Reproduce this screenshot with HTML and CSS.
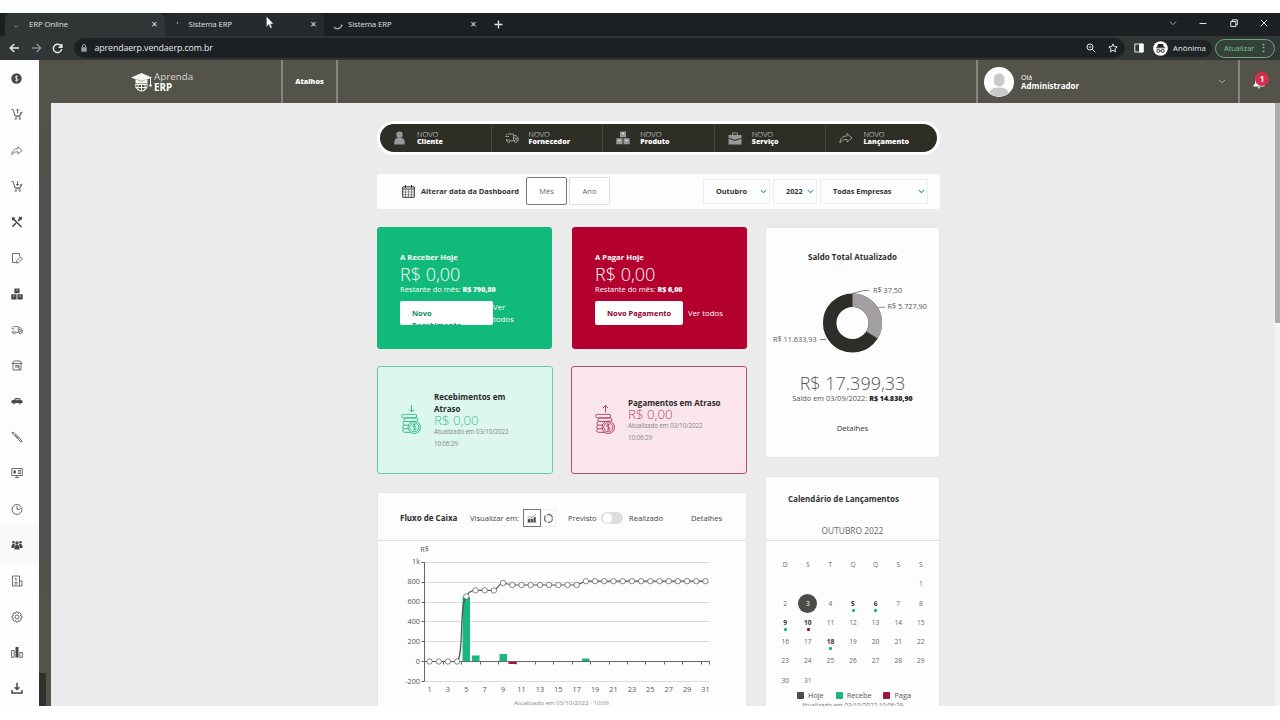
FILE: index.html
```html
<!DOCTYPE html>
<html lang="pt-BR">

<head>
  <meta charset="UTF-8">
  <meta name="viewport" content="width=device-width, initial-scale=1.0">
  <title>ERP Online</title>
  <link rel="stylesheet" href="styles.css">
</head>

<body>
  <svg class="defs" width="0" height="0">
    <symbol id="cart" viewBox="0 0 12 12">
      <path d="M.5 1.5h1.6l1.800 6.300h5.300l2-4M3.200 5l.8 2.500M9.900 4 9 6.800M4.500 8.800h5" />
      <circle cx="4.800" cy="10.700" r=".7" />
      <circle cx="8.800" cy="10.700" r=".7" />
    </symbol>
    <symbol id="share" viewBox="0 0 14 12">
      <path d="M1 11C1 6.500 3.500 4 8 4V1.500L13 6 8 10V7.500C5 7.300 2.500 8 1 11z" />
    </symbol>
    <symbol id="boxes" viewBox="0 0 14 14">
      <path class="solid" d="M4 .5h6v5.700H4zM.3 7.300h6.200v6H.3zM7.500 7.300h6.200v6H7.500z" />
      <path class="cut" d="M6 2.500h2M2.300 9.400h2M9.500 9.400h2" />
    </symbol>
    <symbol id="truck" viewBox="0 0 14 11">
      <path d="M3 1.500h5.500v6.800H5.300M8.500 3h2.700l2 2.500v2.800h-1M8.500 8.300h.8M2.300 8.300H1.500V6.500M.5 4h3.500M1.500 1.500v1.200M10 4.300v1.500h3" />
      <circle cx="3.800" cy="8.600" r="1.400" />
      <circle cx="10.700" cy="8.600" r="1.400" />
    </symbol>
    <symbol id="coins" viewBox="0 0 20 22">
      <rect x=".7" y=".8" width="15" height="3.600" rx="1.800" />
      <rect x="3" y="4.400" width="14" height="3.600" rx="1.800" />
      <path d="M9 8H3.700a1.800 1.800 0 0 0 0 3.600H8M3.500 11.600a1.800 1.800 0 0 0 0 3.600H8M3.500 15.200a1.800 1.800 0 0 0 0 3.600H10" />
      <circle class="coin" cx="13.300" cy="13.800" r="6.200" />
      <circle cx="13.300" cy="13.800" r="4.500" />
      <path d="M15 11.800c-.8-1-3.300-1-3.300.5 0 1.700 3.400 1 3.400 2.800 0 1.500-2.700 1.500-3.500.4M13.300 10.500v6.500" />
    </symbol>
    <symbol id="chev" viewBox="0 0 8 5">
      <path d="M1 1l3 2.800L7 1" />
    </symbol>
  </svg>

  <div class="window">
    <div class="tabs">
      <div class="tab active">
        <span class="favicon">..</span>
        <span class="tab_name">ERP Online</span>
        <span class="close">✕</span>
      </div>
      <div class="tab hover">
        <span class="favicon up">'</span>
        <span class="tab_name">Sistema ERP</span>
        <span class="close">✕</span>
      </div>
      <div class="tab">
        <svg class="spinner" width="10" height="10" viewBox="0 0 10 10"><path d="M1 7c2 2.800 7 2.300 8-2.500" /></svg>
        <span class="tab_name">Sistema ERP</span>
        <span class="close">✕</span>
      </div>
      <svg class="plus" width="9" height="9" viewBox="0 0 9 9"><path d="M4.500 .5v8M.5 4.500h8" /></svg>
      <div class="window_buttons">
        <svg width="8" height="8" viewBox="0 0 8 8"><path class="dim" d="M.8 2.500 4 5.700l3.200-3.200" /></svg>
        <svg width="8" height="8" viewBox="0 0 8 8"><path d="M.5 4.500h7" /></svg>
        <svg width="8" height="8" viewBox="0 0 8 8"><path d="M.8 2.500h5v5h-5zM2.300 2.500V.8h5v5H5.800" /></svg>
        <svg width="8" height="8" viewBox="0 0 8 8"><path d="M.8 .8l6.400 6.400M7.200 .8.800 7.200" /></svg>
      </div>
    </div>

    <div class="toolbar">
      <svg class="nav" width="11" height="10" viewBox="0 0 11 10"><path d="M10 5H1.500M5.300 1 1.300 5l4 4" /></svg>
      <svg class="nav off" width="11" height="10" viewBox="0 0 11 10"><path d="M1 5h8.500M5.700 1l4 4-4 4" /></svg>
      <svg class="nav" width="11" height="11" viewBox="0 0 11 11"><path d="M9.300 3.500A4.200 4.200 0 1 0 9.700 6M9.800 1v3.200H6.500" /></svg>
      <div class="address">
        <svg class="lock" width="6" height="8" viewBox="0 0 6 8"><path d="M.3 3.300h5.400v4.400H.3z" /><path class="arc" d="M1.500 3.500V2a1.500 1.500 0 0 1 3 0v1.500" /></svg>
        <span class="url">aprendaerp.vendaerp.com.br</span>
        <svg class="addr_icon" width="10" height="10" viewBox="0 0 10 10"><circle cx="4" cy="4" r="3" /><path d="M6.300 6.300 9.300 9.300M2.700 4h2.600" /></svg>
        <svg class="addr_icon" width="10" height="10" viewBox="0 0 10 10"><path d="M5 .9l1.200 2.700 3 .3-2.300 2 .7 2.900L5 7.300 2.400 8.800l.7-2.900-2.300-2 3-.3z" /></svg>
      </div>
      <svg class="panel" width="10" height="10" viewBox="0 0 10 10"><path d="M.8 1h8.400v8H.8z" /><path class="fill" d="M5.500 1h3.700v8H5.500z" /></svg>
      <div class="incognito">
        <svg width="15" height="15" viewBox="0 0 15 15"><circle class="bg" cx="7.500" cy="7.500" r="7.300" /><path class="hat" d="M5 3h5l.8 3H4.200zM3 6.300h9v.9H3z" /><circle cx="5.300" cy="9.900" r="1.500" /><circle cx="9.700" cy="9.900" r="1.500" /><path d="M6.800 9.700h1.400" /></svg>
        <span>Anônima</span>
      </div>
      <div class="update"><span>Atualizar</span><b>⋮</b></div>
    </div>

    <div class="app">
      <nav class="sidebar">
        <a><svg width="11" height="11" viewBox="0 0 12 12"><circle class="solid" cx="6" cy="6" r="5.700" /><path class="cut" d="M7.600 4.300c-.7-.9-3.200-.8-3.200.5 0 1.600 3.300.8 3.300 2.500 0 1.300-2.600 1.400-3.400.3M6 2.700v6.600" /></svg></a>
        <a><svg width="12" height="12" viewBox="0 0 12 12"><use href="#cart" /><path d="M6.500 5.500V1M5 2.500 6.500 1 8 2.500" /></svg></a>
        <a><svg width="12" height="11"><use href="#share" /></svg></a>
        <a><svg width="12" height="12" viewBox="0 0 12 12"><use href="#cart" /><path d="M6.500 1v4.500M5 4l1.500 1.500L8 4" /></svg></a>
        <a><svg class="thick" width="12" height="12" viewBox="0 0 12 12"><path d="M1 1.500 10.500 11M11 1 7 5M5 7 1.500 10.700" /><path d="M9 .8 8.300 3.500 11 3M1 3.500h2V1.300" /></svg></a>
        <a><svg width="12" height="12" viewBox="0 0 12 12"><path d="M5 10.500H1.500v-9h7v3M6 8.500 9.500 5l2 1.800-3.700 3.700-2.300.5z" /></svg></a>
        <a><svg width="12" height="12"><use href="#boxes" /></svg></a>
        <a><svg width="12" height="10"><use href="#truck" /></svg></a>
        <a><svg width="12" height="12" viewBox="0 0 12 12"><path d="M1 4.500 3 2h6l2 2.500zM2 4.500V11h8V4.500M4 6.500h4V11M4 8h4" /></svg></a>
        <a><svg width="12" height="8" viewBox="0 0 12 8"><path class="solid" d="M.5 3.500 3 2.800 4.500 1h4L10 3l1.500.8V6h-11z" /><circle cx="3" cy="6" r="1" /><circle cx="9" cy="6" r="1" /><path class="cut" d="M4.300 2.700h4.500" /></svg></a>
        <a><svg width="12" height="12" viewBox="0 0 12 12"><path d="M1 1.200 3.500 2l5 5-1.300 1.300-5-5zM4 3.700 7 7M8.500 7 11 10.500l-1 .5-2.700-2.700" /></svg></a>
        <a><svg width="12" height="12" viewBox="0 0 12 12"><path d="M.8 1.500h10.500v7H.8zM4 10.500h4M6 8.500v2M7 3.500h3M7 5h3M7 6.500h3" /><path class="solid" d="M2.500 3.500h2.300v3H2.500z" /></svg></a>
        <a><svg width="12" height="12" viewBox="0 0 12 12"><path d="M10.500 4.300A5 5 0 1 0 11 6.500M6 3v3.200h3M11.500 4.500 10.400 6 9 5" /></svg></a>
        <a class="current"><svg width="12" height="10" viewBox="0 0 12 10"><path class="solid" d="M3.500 9.500c-.3-3 .3-4 1.500-4.500h2c1.200.5 1.800 1.500 1.500 4.500zM.5 8C.2 5.500.8 4.500 2 4h2L3 8zM11.500 8c.3-2.500-.3-3.500-1.500-4H8l1 4z" /><circle class="solid" cx="6" cy="3" r="1.700" /><circle class="solid" cx="2.500" cy="2.300" r="1.300" /><circle class="solid" cx="9.500" cy="2.300" r="1.300" /></svg></a>
        <a><svg width="12" height="12" viewBox="0 0 12 12"><path d="M1.500 1h7v10h-7zM8.500 6H11v5H8.500M3.500 9h3M3.500 7.500h3M4 3.200h1V6" /></svg></a>
        <a><svg width="12" height="12" viewBox="0 0 12 12"><path d="M5 1h2l.4 1.400 1.300-.7L10.200 3.200l-.7 1.300L11 5v2l-1.500.4.7 1.400-1.500 1.400-1.300-.7L7 11H5l-.4-1.500-1.400.7L1.800 8.800l.7-1.400L1 7V5l1.500-.5-.7-1.300 1.400-1.500 1.400.7z" /><circle cx="6" cy="6" r="2" /></svg></a>
        <a><svg width="12" height="12" viewBox="0 0 12 12"><path d="M.6 4.500h2.600v6.800H.6zM8.800 6.500h2.600v4.800H8.800z" /><path class="solid" d="M4.500 1h3v10.500h-3z" /></svg></a>
        <a><svg class="thick" width="12" height="12" viewBox="0 0 12 12"><path d="M6 .8v6.500M3.700 5.200 6 7.500l2.300-2.300M1 8v3h10V8" /></svg></a>
      </nav>

      <div class="main">
        <header class="header">
          <div class="logo">
            <svg width="22" height="20" viewBox="0 0 22 20"><path class="cap" d="M0 5.500 10.500 1 21 5.500 10.500 9.500zM4.500 7v4.500h12V7l-6 2z" /><path d="M19.500 6v7M4 12.500h12M4.500 15.500h11.500M8 12c-2 3-1 5 .5 6.500M13 12c2 3 1 5-.5 6.500M5 12c-1 4 2 7 5.500 7s6.500-3 5.500-7M10.500 12v7" /><circle class="cap" cx="19.500" cy="13.500" r="1.300" /></svg>
            <div class="logo_text">Aprenda<b>ERP</b></div>
          </div>
          <div class="shortcuts">Atalhos</div>
          <div class="user">
            <svg width="30" height="30" viewBox="0 0 30 30"><circle class="face_bg" cx="15" cy="15" r="15" /><rect class="face" x="10" y="6.500" width="10.500" height="13" rx="5" /><path class="face" d="M5.500 26C6 22 10 20.500 15 20.500S24 22 24.500 26A15 15 0 0 1 5.500 26z" /></svg>
            <div class="user_name">Olá<b>Administrador</b></div>
            <svg class="arrow" width="8" height="5"><use href="#chev" /></svg>
          </div>
          <div class="bell">
            <svg width="12" height="14" viewBox="0 0 12 14"><path d="M.5 11.500h11V10L10 9V5a4 4 0 0 0-8 0v4L.5 10zM4.500 12.300h3L6 13.800z" /></svg>
            <span class="badge">1</span>
          </div>
        </header>

        <div class="content_row">
          <div class="strip"><div class="strip_thumb"></div></div>
          <div class="content">
            <div class="dashboard">

              <div class="quick">
                <a class="client"><svg width="13" height="14" viewBox="0 0 13 14"><circle class="solid" cx="6.500" cy="3.700" r="3.200" /><path class="solid" d="M1.300 13.500c-.4-4 1-6.300 3-6.500h4.400c2 .2 3.400 2.500 3 6.500z" /></svg><span>NOVO<b>Cliente</b></span></a>
                <a><svg width="14" height="12"><use href="#truck" /></svg><span>NOVO<b>Fornecedor</b></span></a>
                <a><svg width="14" height="14"><use href="#boxes" /></svg><span>NOVO<b>Produto</b></span></a>
                <a><svg width="14" height="13" viewBox="0 0 14 13"><path class="solid" d="M.5 3h13v9.500H.5z" /><path d="M4.500 3V1h5v2" /><path class="cut" d="M.5 6.300 7 8.300l6.500-2" /></svg><span>NOVO<b>Serviço</b></span></a>
                <a><svg width="14" height="12"><use href="#share" /></svg><span>NOVO<b>Lançamento</b></span></a>
              </div>

              <div class="filter">
                <svg width="13" height="13" viewBox="0 0 13 13"><path d="M.7 1.800h11.600v10.500H.7zM.7 4h11.600" /><path class="thin" d="M.7 7h11.600M.7 9.700h11.600M3.500 4.500v7.800M6.500 4.500v7.800M9.500 4.500v7.800" /><path d="M3.500 0v3M9.500 0v3" /></svg>
                <b class="filter_title">Alterar data da Dashboard</b>
                <button class="on">Mês</button>
                <button>Ano</button>
                <div class="select month">Outubro<svg width="7" height="5"><use href="#chev" /></svg></div>
                <div class="select year">2022<svg width="7" height="5"><use href="#chev" /></svg></div>
                <div class="select company">Todas Empresas<svg width="7" height="5"><use href="#chev" /></svg></div>
              </div>

              <div class="columns">
                <div class="col_left">
                  <div class="pair">
                    <div class="today receive">
                      <b>A Receber Hoje</b>
                      <div class="amount">R$ 0,00</div>
                      <div class="rest">Restante do mês: <b>R$ 790,80</b></div>
                      <div class="actions"><a class="btn">Novo Recebimento</a><a class="all">Ver todos</a></div>
                    </div>
                    <div class="today pay">
                      <b>A Pagar Hoje</b>
                      <div class="amount">R$ 0,00</div>
                      <div class="rest">Restante do mês: <b>R$ 6,00</b></div>
                      <div class="actions"><a class="btn">Novo Pagamento</a><a class="all">Ver todos</a></div>
                    </div>
                  </div>

                  <div class="pair late_pair">
                    <div class="late green">
                      <svg width="21" height="32" viewBox="0 0 21 32"><path d="M10.500 1v7M8 5.500l2.500 2.500L13 5.500" /><use href="#coins" y="9.500" width="20" height="22" /></svg>
                      <div class="late_text">
                        <b>Recebimentos em Atraso</b>
                        <div class="late_amount">R$ 0,00</div>
                        <small>Atualizado em 03/10/2022 10:06:29</small>
                      </div>
                    </div>
                    <div class="late red">
                      <svg width="21" height="32" viewBox="0 0 21 32"><path d="M10.500 8.500v-7M8 4l2.500-2.500L13 4" /><use href="#coins" y="9.500" width="20" height="22" /></svg>
                      <div class="late_text">
                        <b>Pagamentos em Atraso</b>
                        <div class="late_amount">R$ 0,00</div>
                        <small>Atualizado em 03/10/2022 10:06:29</small>
                      </div>
                    </div>
                  </div>

                  <div class="flow card">
                    <div class="flow_head">
                      <b>Fluxo de Caixa</b>
                      <span class="view_label">Visualizar em:</span>
                      <span class="view on"><svg width="10" height="10" viewBox="0 0 10 10"><path class="solid" d="M.8 6.500 3 5.500V9H.8zM3.600 5.500l2.200.5v3H3.600zM6.500 5 8.700 3.500V9H6.500z" /><path class="thin" d="M.5 5 3 3.500l2 1L9 1M.5 9.400h9" /></svg></span>
                      <span class="view"><svg width="11" height="11" viewBox="0 0 11 11"><circle class="ring" cx="5.500" cy="5.500" r="4" /></svg></span>
                      <span class="planned">Previsto</span>
                      <span class="toggle"></span>
                      <span class="done">Realizado</span>
                      <span class="details">Detalhes</span>
                    </div>
                    <svg class="chart" width="368" height="170" viewBox="0 0 368 170">
                      <defs>
                        <marker id="dot" markerUnits="userSpaceOnUse" markerWidth="8" markerHeight="8" refX="4" refY="4">
                          <circle cx="4" cy="4" r="2.700" />
                        </marker>
                      </defs>
                      <path class="grid" d="M47.500 21.500h285M47.500 41.500h285M47.500 61.500h285M47.500 80.500h285M47.500 100.500h285M47.500 140.500h285" />
                      <g class="bars">
                        <rect x="85.500" y="56" width="7.500" height="64.500" />
                        <rect x="95" y="114.500" width="7.500" height="6" />
                        <rect x="122.500" y="113" width="7.500" height="7.500" />
                        <rect class="neg" x="131.500" y="120.500" width="8" height="2.500" />
                        <rect x="205" y="117.500" width="7.500" height="3" />
                      </g>
                      <path class="axis" d="M47.500 21v119.500M44.500 21.500h3M44.500 41.500h3M44.500 61.500h3M44.500 80.500h3M44.500 100.500h3M44.500 140.500h3M44.500 120.500h288.500M66.500 120.500v3M84.500 120.500v3M103.500 120.500v3M121.500 120.500v3M139.500 120.500v3M158.500 120.500v3M176.500 120.500v3M195.500 120.500v3M213.500 120.500v3M232.500 120.500v3M250.500 120.500v3M268.500 120.500v3M287.500 120.500v3M305.500 120.500v3M324.500 120.500v3M332.500 120.500v3" />
                      <path class="line" d="M52.500 120.500L61.700 120.500L70.900 120.500L80.100 120.500C87 115 82 62 89.300 55.500C91 51 94 49.300 98.500 49.300L107.700 49.300L116.900 49.500C120 49 122 42 126.100 42L135.300 44L144.500 44L153.700 44L162.900 44L172.100 44L181.300 44L190.500 44L199.700 44L208.900 40.200L218.100 40.200L227.300 40.200L236.500 40.200L245.700 40.200L254.900 40.200L264.100 40.200L273.300 40.200L282.500 40.200L291.700 40.200L300.900 40.200L310.100 40.200L319.300 40.200L328.500 40.200" />
                      <g class="y_labels">
                        <text x="52" y="10.500">R$</text>
                        <text x="43" y="23">1k</text>
                        <text x="43" y="43">800</text>
                        <text x="43" y="63">600</text>
                        <text x="43" y="83">400</text>
                        <text x="43" y="103">200</text>
                        <text x="43" y="123">0</text>
                        <text x="43" y="143">-200</text>
                      </g>
                      <g class="x_labels">
                        <text x="52.500" y="151">1</text>
                        <text x="70.900" y="151">3</text>
                        <text x="89.300" y="151">5</text>
                        <text x="107.700" y="151">7</text>
                        <text x="126.100" y="151">9</text>
                        <text x="144.500" y="151">11</text>
                        <text x="162.900" y="151">13</text>
                        <text x="181.300" y="151">15</text>
                        <text x="199.700" y="151">17</text>
                        <text x="218.100" y="151">19</text>
                        <text x="236.500" y="151">21</text>
                        <text x="254.900" y="151">23</text>
                        <text x="273.300" y="151">25</text>
                        <text x="291.700" y="151">27</text>
                        <text x="310.100" y="151">29</text>
                        <text x="328.500" y="151">31</text>
                        <text class="updated" x="184.500" y="163.500">Atualizado em 03/10/2022 - 10:06</text>
                      </g>
                    </svg>
                  </div>
                </div>

                <div class="col_right">
                  <div class="balance card">
                    <b>Saldo Total Atualizado</b>
                    <svg class="donut" width="175" height="80" viewBox="0 0 175 80">
                      <circle class="dark" cx="87.500" cy="45" r="22.800" />
                      <path class="light" d="M87.500 22.200A22.800 22.800 0 0 1 107 57" />
                      <path class="lead" d="M87.500 15.500 99 12.500h5M113 30l3-.8h4M61 61.500h-6" />
                      <text x="108" y="15">R$ 37,50</text>
                      <text x="122.500" y="31.300">R$ 5.727,90</text>
                      <text x="8" y="64">R$ 11.633,93</text>
                    </svg>
                    <div class="total">R$ 17.399,33</div>
                    <div class="before">Saldo em 03/09/2022: <b>R$ 14.830,90</b></div>
                    <div class="details">Detalhes</div>
                  </div>

                  <div class="calendar card">
                    <b class="cal_title">Calendário de Lançamentos</b>
                    <div class="cal_month">OUTUBRO 2022</div>
                    <div class="days">
                      <span>D</span><span>S</span><span>T</span><span>Q</span><span>Q</span><span>S</span><span>S</span>
                      <span class="first">1</span>
                      <span>2</span><span class="today_day">3</span><span>4</span><span class="in">5</span><span class="in">6</span><span>7</span><span>8</span>
                      <span class="in">9</span><span class="out">10</span><span>11</span><span>12</span><span>13</span><span>14</span><span>15</span>
                      <span>16</span><span>17</span><span class="in">18</span><span>19</span><span>20</span><span>21</span><span>22</span>
                      <span>23</span><span>24</span><span>25</span><span>26</span><span>27</span><span>28</span><span>29</span>
                      <span>30</span><span>31</span>
                    </div>
                    <div class="legend"><i class="hoje"></i>Hoje<i class="recebe"></i>Recebe<i class="paga"></i>Paga</div>
                    <div class="cal_updated">Atualizado em 03/10/2022 10:06:29</div>
                  </div>
                </div>
              </div>
            </div>
          </div>
          <div class="scroll"><div class="scroll_thumb"></div></div>
        </div>
      </div>
    </div>
  </div>
  <svg class="cursor" width="8" height="13" viewBox="0 0 8 13"><path d="M.5 .5v10.300l2.400-2.300 1.600 3.700 1.600-.7-1.600-3.600h3z" /></svg>
</body>

</html>
```
FILE: styles.css
```css
* {
  box-sizing: border-box;
}

body {
  margin: 0;
  background-color: #fff;
  color: #333;
  font-family: "Open Sans", "Noto Sans", sans-serif;
  font-size: 7.5px;
  line-height: 12px;
}

svg {
  display: block;
  flex: none;
  fill: none;
  stroke: currentColor;
}

.defs {
  position: absolute;
}

.window {
  margin-top: 13px;
  height: 693px;
  overflow: hidden;
}

/* browser */
.tabs {
  display: flex;
  align-items: center;
  height: 23px;
  padding-left: 5px;
  background-color: #1c2022;
  color: #dfe1e2;
  font-size: 7.8px;
}

.tab {
  display: flex;
  align-items: center;
  width: 159.5px;
  height: 23px;
  padding: 0 5px 2px 9px;
  border-radius: 6px 6px 0 0;
}

.tab.active {
  background-color: #303536;
}

.tab.hover {
  background-color: #262a2c;
}

.favicon {
  width: 15px;
  font-size: 8px;
}

.favicon.up {
  padding-left: 3px;
}

.spinner {
  margin: 2px 5px 0 0;
  stroke: #9ca2ae;
  stroke-width: 1.3;
}

.tab_name {
  flex: 1;
  white-space: nowrap;
  letter-spacing: -.08px;
}

.close {
  font-size: 8px;
  width: 9px;
}

.plus {
  margin-left: 10px;
  stroke-width: 1.4;
}

.window_buttons {
  display: flex;
  gap: 22.5px;
  margin-left: auto;
  padding: 0 12px 3px 0;
}

.window_buttons .dim {
  stroke: #999;
}

.toolbar {
  display: flex;
  align-items: center;
  height: 24px;
  padding: 0 5px 0 9px;
  background-color: #303536;
  color: #e8eaea;
  font-size: 7.8px;
}

.nav {
  margin-right: 10.5px;
  stroke-width: 1.5;
}

.nav.off {
  color: #858a8b;
}

.address {
  display: flex;
  align-items: center;
  width: 1052px;
  height: 20px;
  margin-right: 9px;
  padding: 0 7px 0 7px;
  border-radius: 10px;
  background-color: #1c2022;
}

.lock {
  color: #9ca0a1;
  fill: #9ca0a1;
  stroke: none;
}

.lock .arc {
  fill: none;
  stroke: #9ca0a1;
}

.url {
  flex: 1;
  margin-left: 8px;
  font-size: 8.8px;
  letter-spacing: -.1px;
}

.addr_icon {
  margin-left: 12px;
}

.panel .fill {
  fill: #fff;
}

.incognito {
  display: flex;
  align-items: center;
  gap: 5px;
  width: 59px;
  height: 17px;
  margin-left: 9px;
  border-radius: 9px;
  background-color: #1f2325;
}

.incognito .bg,
.incognito .hat {
  fill: #fff;
  stroke: none;
}

.incognito .hat {
  fill: #222;
}

.incognito svg {
  color: #333;
}

.update {
  display: flex;
  align-items: center;
  justify-content: space-between;
  width: 60px;
  height: 19px;
  margin-left: 3px;
  padding: 0 5px 0 8px;
  border: 1px solid #70a678;
  border-radius: 10px;
  background-color: #344039;
  color: #7cc688;
  font-size: 7.4px;
}

.update b {
  font-size: 11px;
}

.cursor {
  position: absolute;
  left: 266px;
  top: 16px;
  fill: #fff;
  stroke: #555;
  stroke-width: .5;
}

/* app */
.app {
  display: flex;
  height: 646px;
}

.sidebar {
  width: 39px;
  background-color: #fdfdfd;
  color: #484848;
}

.sidebar a {
  display: flex;
  align-items: center;
  height: 35.88px;
  padding: 1px 0 0 11px;
}

.sidebar svg {
  stroke-width: .8;
}

.sidebar svg.thick {
  stroke-width: 1.5;
}

.sidebar .current {
  background-color: #f8f8f8;
}

.solid {
  fill: currentColor;
  stroke: none;
}

.cut {
  stroke: #fff;
}

.thin {
  stroke-width: .5;
}

.main {
  flex: 1;
}

.header {
  display: flex;
  height: 43px;
  background-color: #53534a;
  color: #fff;
}

.logo {
  display: flex;
  align-items: center;
  width: 244px;
  padding-left: 92px;
  border-right: 2px solid #85857e;
}

.logo svg {
  color: #f5f5f0;
}

.cap {
  fill: #f5f5f0;
  stroke: none;
}

.logo_text {
  margin-left: 1px;
  color: #d6d6cf;
  font-size: 9.8px;
  line-height: 11px;
}

.logo_text b {
  display: block;
  color: #fff;
}

.shortcuts {
  width: 55px;
  border-right: 2px solid #85857e;
  font-size: 7.2px;
  font-weight: 800;
  line-height: 43px;
  text-align: center;
}

.user {
  display: flex;
  align-items: center;
  width: 264px;
  margin-left: auto;
  padding: 0 12px 0 6px;
  border-left: 2px solid #85857e;
  border-right: 2px solid #85857e;
}

.user_name {
  flex: 1;
  margin-left: 7px;
  font-size: 7px;
  line-height: 7.5px;
}

.user_name b {
  display: block;
  font-size: 8px;
}

.arrow {
  color: #aaa;
}

.face_bg {
  fill: #fff;
  stroke: none;
}

.face {
  fill: #c9c9c9;
  stroke: none;
}

.bell {
  position: relative;
  width: 40px;
  padding: 15px 0 0 13px;
}

.bell svg {
  fill: #fff;
  stroke: none;
}

.badge {
  position: absolute;
  left: 15px;
  top: 12px;
  width: 14px;
  height: 14px;
  border-radius: 7px;
  background-color: #d32f4b;
  font-size: 8px;
  font-weight: bold;
  line-height: 14px;
  text-align: center;
}

.content_row {
  display: flex;
  height: 603px;
}

.strip {
  display: flex;
  align-items: flex-end;
  width: 12px;
  background: linear-gradient(#53534a, #505050 25%, #505050 65%, #53534a 85%);
}

.strip_thumb {
  width: 7px;
  height: 33px;
  background-color: #30302c;
}

.content {
  flex: 1;
  padding: 18px 0 0 326px;
  overflow: hidden;
  background-color: #ebebeb;
}

.scroll {
  width: 5px;
  background-color: #f3f5f1;
}

.scroll_thumb {
  height: 220px;
  background-color: #adadab;
}

.dashboard {
  width: 563px;
}

.quick {
  display: flex;
  height: 34px;
  border: 3px solid #fff;
  border-radius: 17px;
  overflow: hidden;
  background-color: #2d2e26;
  color: #999;
}

.quick a {
  display: flex;
  align-items: center;
  flex: 1;
  gap: 10px;
  padding-left: 13px;
  border-right: 1px solid #41483f;
}

.quick .client {
  gap: 11px;
}

.quick a:last-child {
  border: none;
}

.quick .cut {
  stroke: #2d2e26;
}

.quick span {
  color: #e5e5e5;
  font-weight: 300;
  font-size: 7.5px;
  line-height: 7.5px;
}

.quick b {
  display: block;
  color: #fff;
  font-size: 7.1px;
  font-weight: 800;
}

.filter {
  display: flex;
  align-items: center;
  height: 35px;
  margin-top: 19px;
  padding: 0 12px 1px 25px;
  border-radius: 2px;
  background-color: #fdfdfd;
}

.filter_title {
  width: 99px;
  margin: 0 6px;
  font-size: 7.4px;
  white-space: nowrap;
}

.filter button {
  width: 41px;
  height: 28px;
  margin-right: 2px;
  padding: 0;
  border: 1px solid #ddd;
  border-radius: 2px;
  background-color: #fff;
  color: #666;
  font-family: inherit;
  font-size: 7.5px;
}

.filter button.on {
  border-color: #777;
}

.select {
  display: flex;
  align-items: center;
  justify-content: space-between;
  height: 25px;
  margin-left: 3px;
  padding: 0 2px 0 12px;
  border: 1px solid #eee;
  font-size: 7.3px;
  font-weight: bold;
}

.select svg {
  color: #3e93bd;
  stroke-width: 1.2;
}

.month {
  width: 67px;
  margin-left: auto;
}

.year {
  width: 44px;
}

.company {
  width: 108px;
}

.columns {
  display: flex;
  justify-content: space-between;
  margin-top: 18px;
}

.col_left {
  width: 370px;
}

.col_right {
  width: 175px;
}

.pair {
  display: flex;
  justify-content: space-between;
}

.today {
  width: 175px;
  height: 122px;
  padding: 24px 23px 0;
  border-radius: 3px;
  color: #fff;
}

.receive {
  background-color: #11b97b;
}

.pay {
  background-color: #b3002f;
}

.today > b {
  display: block;
  font-size: 7.7px;
}

.amount {
  font-size: 18px;
  font-weight: 300;
  line-height: 22px;
}

.rest {
  line-height: 9px;
  white-space: nowrap;
}

.rest b {
  font-weight: 800;
  font-size: 7px;
}

.actions {
  display: flex;
  margin-top: 7px;
}

.btn {
  width: 93px;
  height: 24px;
  padding: 6px 12px 0;
  overflow: hidden;
  border-radius: 2px;
  background-color: #fff;
  color: #0c8b5c;
  font-weight: bold;
  white-space: nowrap;
}

.receive .btn {
  white-space: normal;
}

.pay .btn {
  width: 88px;
  color: #8a0026;
}

.all {
  width: 30px;
  font-size: 7.8px;
}

.pay .all {
  width: auto;
  margin-left: 5px;
  line-height: 24px;
}

.late_pair {
  margin-top: 17px;
}

.late {
  display: flex;
  align-items: center;
  width: 176px;
  height: 108px;
  padding-left: 23px;
  border: 1px solid;
  border-radius: 3px;
}

.late.green {
  border-color: #62caa5;
  background-color: #dcf7ed;
  color: #38bd90;
}

.late.red {
  border-color: #ae5070;
  background-color: #f9e5ea;
  color: #b84368;
}

.green .coin {
  fill: #dcf7ed;
}

.red .coin {
  fill: #f9e5ea;
}

.late_text {
  width: 100px;
  margin-left: 12px;
}

.late_text b {
  display: block;
  color: #2b2b2b;
  font-size: 8px;
}

.green .late_text b {
  width: 80px;
}

.late_amount {
  font-size: 13.3px;
  font-weight: 300;
  line-height: 11px;
}

.late small {
  display: block;
  width: 80px;
  color: #888;
  font-size: 6.3px;
  letter-spacing: -.1px;
}

.card {
  border: 1px solid #e4e4e4;
  border-radius: 2px;
  background-color: #fdfdfd;
}

.flow {
  height: 225px;
  margin-top: 18px;
}

.flow_head {
  display: flex;
  align-items: center;
  height: 48px;
  padding: 3px 0 0 22px;
  border-bottom: 1px solid #e2e2e2;
  color: #444;
  font-size: 7.6px;
  white-space: nowrap;
}

.flow_head b {
  width: 70px;
  color: #2b2b2b;
  font-size: 8px;
}

.view_label {
  width: 53px;
}

.view {
  display: flex;
  align-items: center;
  justify-content: center;
  width: 15px;
  height: 18px;
  border: 1px solid #eee;
}

.view.on {
  width: 18px;
  border-color: #777;
}

.ring {
  stroke: #777;
  stroke-width: 1.4;
  stroke-dasharray: 7 1.370;
}

.planned {
  margin-left: 12px;
  width: 33px;
}

.toggle {
  width: 22px;
  height: 12px;
  padding: 1px 2px;
  border-radius: 6px;
  background-color: #ddd;
}

.toggle::before {
  content: "";
  display: block;
  width: 9px;
  height: 10px;
  border-radius: 5px;
  background-color: #fff;
}

.done {
  width: 62px;
  margin-left: 6px;
}

.chart {
  margin-left: -1px;
}

.chart text,
.donut text {
  fill: #555;
  stroke: none;
  font-size: 7.3px;
}

.grid {
  stroke: #dcdcdc;
}

.axis {
  stroke: #666;
}

.bars {
  fill: #18b780;
  stroke: none;
}

.neg {
  fill: #a3123e;
}

.line {
  stroke: #555;
  stroke-width: 1.2;
  marker: url(#dot);
}

#dot circle {
  fill: #fff;
  stroke: #666;
  stroke-width: .8;
}

.y_labels {
  text-anchor: end;
}

.x_labels {
  text-anchor: middle;
}

.chart .updated {
  fill: #888;
  font-size: 6.1px;
}

.balance {
  height: 231px;
  padding-top: 23px;
  text-align: center;
}

.balance > b {
  display: block;
  font-size: 8px;
}

.donut {
  margin: 15px 0 0 -1px;
}

.dark,
.light {
  stroke: #2d2e28;
  stroke-width: 13.500;
}

.light {
  stroke: #a39fa3;
}

.lead {
  stroke: #666;
  stroke-width: .8;
}

.total {
  margin-top: 14px;
  color: #555;
  font-size: 18px;
  font-weight: 300;
  line-height: 22px;
}

.before {
  color: #555;
  font-size: 7.4px;
  line-height: 8px;
  white-space: nowrap;
}

.before b {
  color: #222;
  font-size: 7px;
  font-weight: 800;
}

.balance .details {
  margin-top: 19px;
  font-size: 7.7px;
}

.calendar {
  height: 240px;
  margin-top: 18px;
}

.cal_title {
  display: block;
  padding: 16px 0 0 22px;
  font-size: 8px;
}

.cal_month {
  height: 36px;
  padding-top: 20px;
  border-bottom: 1px solid #ddd;
  color: #666;
  font-size: 8.4px;
  text-align: center;
}

.days {
  display: grid;
  grid-template-columns: repeat(7, 22.6px);
  grid-auto-rows: 19.3px;
  justify-content: center;
  padding: 14px 0 0 1px;
  color: #666;
  font-size: 6.6px;
  line-height: 19.3px;
  text-align: center;
}

.first {
  grid-column: 7;
}

.today_day {
  width: 19px;
  height: 19px;
  margin: 0 auto;
  border-radius: 50%;
  background-color: #4b4c47;
  color: #fff;
}

.in,
.out {
  position: relative;
  color: #333;
  font-weight: bold;
}

.in::after,
.out::after {
  content: "";
  position: absolute;
  left: 10px;
  top: 15px;
  width: 3px;
  height: 3px;
  border-radius: 1px;
  background-color: #18b780;
}

.out::after {
  background-color: #b3002f;
}

.legend {
  display: flex;
  align-items: center;
  height: 10px;
  padding-left: 31px;
  color: #555;
  font-size: 7.3px;
}

.legend i {
  width: 7px;
  height: 7px;
  margin-right: 4px;
  border-radius: 1px;
  background-color: #4b4c47;
}

.legend .recebe {
  margin-left: 12px;
  background-color: #18b780;
}

.legend .paga {
  margin-left: 12px;
  background-color: #a3123e;
}

.cal_updated {
  color: #777;
  font-size: 6.2px;
  line-height: 11px;
  text-align: center;
}
```
